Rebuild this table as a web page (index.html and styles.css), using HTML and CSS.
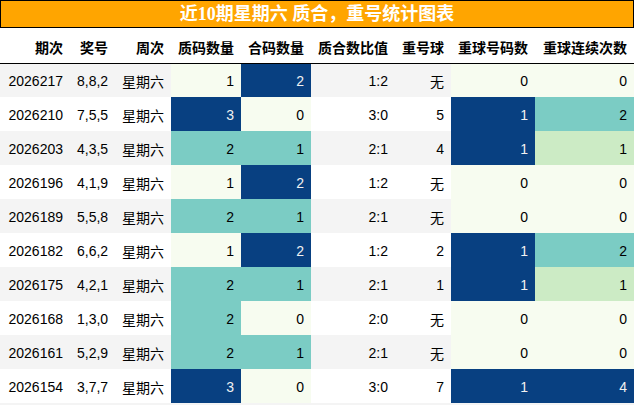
FILE: index.html
```html
<!DOCTYPE html>
<html lang="zh">
<head>
<meta charset="utf-8">
<link rel="stylesheet" href="styles.css">
</head>
<body>
<div class="wrap">
  <div class="title">近10期星期六 质合，重号统计图表</div>
  <table class="stats">
    <colgroup>
      <col class="w70"><col class="w45"><col class="w56"><col class="w70"><col class="w70"><col class="w84"><col class="w56"><col class="w84"><col class="w99">
    </colgroup>
    <thead>
      <tr><th>期次</th><th>奖号</th><th>周次</th><th>质码数量</th><th>合码数量</th><th>质合数比值</th><th>重号球</th><th>重球号码数</th><th>重球连续次数</th></tr>
    </thead>
    <tbody>
      <tr><td>2026217</td><td>8,8,2</td><td>星期六</td><td class="c0">1</td><td class="c3">2</td><td>1:2</td><td>无</td><td class="c0">0</td><td class="c0">0</td></tr>
      <tr><td>2026210</td><td>7,5,5</td><td>星期六</td><td class="c3">3</td><td class="c0">0</td><td>3:0</td><td>5</td><td class="c3">1</td><td class="c2">2</td></tr>
      <tr><td>2026203</td><td>4,3,5</td><td>星期六</td><td class="c2">2</td><td class="c2">1</td><td>2:1</td><td>4</td><td class="c3">1</td><td class="c1">1</td></tr>
      <tr><td>2026196</td><td>4,1,9</td><td>星期六</td><td class="c0">1</td><td class="c3">2</td><td>1:2</td><td>无</td><td class="c0">0</td><td class="c0">0</td></tr>
      <tr><td>2026189</td><td>5,5,8</td><td>星期六</td><td class="c2">2</td><td class="c2">1</td><td>2:1</td><td>无</td><td class="c0">0</td><td class="c0">0</td></tr>
      <tr><td>2026182</td><td>6,6,2</td><td>星期六</td><td class="c0">1</td><td class="c3">2</td><td>1:2</td><td>2</td><td class="c3">1</td><td class="c2">2</td></tr>
      <tr><td>2026175</td><td>4,2,1</td><td>星期六</td><td class="c2">2</td><td class="c2">1</td><td>2:1</td><td>1</td><td class="c3">1</td><td class="c1">1</td></tr>
      <tr><td>2026168</td><td>1,3,0</td><td>星期六</td><td class="c2">2</td><td class="c0">0</td><td>2:0</td><td>无</td><td class="c0">0</td><td class="c0">0</td></tr>
      <tr><td>2026161</td><td>5,2,9</td><td>星期六</td><td class="c2">2</td><td class="c2">1</td><td>2:1</td><td>无</td><td class="c0">0</td><td class="c0">0</td></tr>
      <tr><td>2026154</td><td>3,7,7</td><td>星期六</td><td class="c3">3</td><td class="c0">0</td><td>3:0</td><td>7</td><td class="c3">1</td><td class="c3">4</td></tr>
    </tbody>
  </table>
  <div class="tail"></div>
</div>
</body>
</html>
```

FILE: styles.css
```css
html, body {
  margin: 0;
  padding: 0;
  background: #fff;
}
.wrap {
  width: 634px;
}
.title {
  box-sizing: border-box;
  height: 28px;
  border: 1px solid #000;
  background: #ffa500;
  color: #fff;
  font-family: "Liberation Serif", "Noto Sans CJK SC", serif;
  font-weight: bold;
  font-size: 18px;
  line-height: 26px;
  text-align: center;
}
.stats {
  border-collapse: collapse;
  table-layout: fixed;
  width: 634px;
  font-family: "Liberation Sans", "Noto Sans CJK SC", sans-serif;
  font-size: 14px;
  color: #000;
}
.w45 { width: 45px; }
.w56 { width: 56px; }
.w70 { width: 70px; }
.w84 { width: 84px; }
.w99 { width: 99px; }
.stats th {
  box-sizing: border-box;
  height: 35px;
  padding: 3px 7px 0;
  text-align: right;
  font-weight: bold;
  border-bottom: 1px solid #000;
  white-space: nowrap;
}
.stats td {
  box-sizing: border-box;
  height: 34px;
  padding: 2px 7px 0;
  text-align: right;
  white-space: nowrap;
}
.stats tbody tr:nth-child(odd) { background: #f4f4f4; }
.stats tbody tr:nth-child(even) { background: #fff; }
.stats td.c0 { background: #f7fcf0; color: #000; }
.stats td.c1 { background: #ccebc5; color: #000; }
.stats td.c2 { background: #7bccc4; color: #000; }
.stats td.c3 { background: #084081; color: #f1f1f1; }
.tail {
  height: 2px;
  background: #f4f4f4;
}
```
